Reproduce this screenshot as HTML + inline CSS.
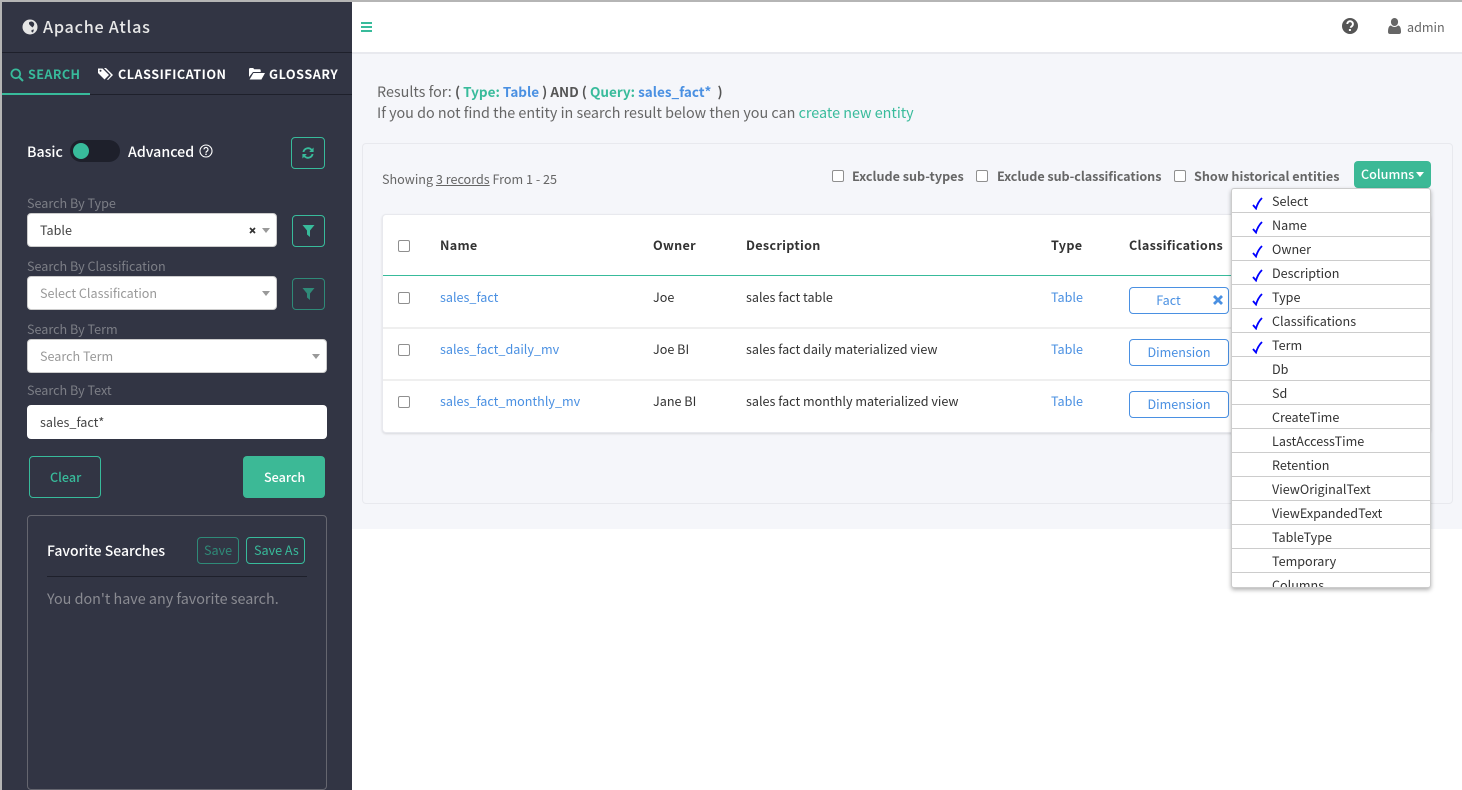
<!DOCTYPE html>
<html><head><meta charset="utf-8"><style>
*{box-sizing:border-box}
html,body{margin:0;padding:0;width:1462px;height:790px;overflow:hidden;background:#fff}
body{position:relative;font-family:"Noto Sans CJK SC","Liberation Sans",sans-serif;font-size:12.6px;color:#333}
.a{position:absolute}
.t{position:absolute;white-space:nowrap;line-height:20px;height:20px}
.b{font-weight:700}
.lbl{color:#7c7e86;font-size:12.6px}
.sel{position:absolute;background:#fff;border-radius:4px;border:1px solid #ccc;height:34px}
.car{position:absolute;width:0;height:0;border-left:4px solid transparent;border-right:4px solid transparent;border-top:5px solid #999}
.ib{position:absolute;border:1px solid #38bb9b;border-radius:4px}
.row{position:absolute;left:1232px;width:198px;height:24px;border-bottom:1px solid #ccc}
.row span{position:absolute;left:40px;top:2px;line-height:20px;font-size:12.6px;color:#333;white-space:nowrap}
.row i{position:absolute;left:20px;top:8px}
.cb{position:absolute;width:12px;height:12px;border:1px solid #8f8f8f;border-radius:2px;background:#fff}
.tag{position:absolute;left:1129px;width:100px;height:27px;border:1px solid #4a90e2;border-radius:4px;background:#fff;color:#4a90e2;text-align:center;line-height:24px;font-size:12.6px}
.blue{color:#4a90e2}.green{color:#38bb9b}
.q b{font-size:13.5px}
</style></head><body>
<div class="a" style="left:0;top:0;width:352px;height:790px;background:#323544"></div>
<div class="a" style="left:0;top:0;width:2px;height:790px;background:#b5b5b5"></div>
<div class="a" style="left:0;top:0;width:1462px;height:2px;background:#b5b5b5"></div>
<div class="a" style="left:2px;top:52px;width:350px;height:1px;background:#1e202b"></div>
<div class="a" style="left:2px;top:94px;width:350px;height:1px;background:#1e202b"></div>
<div class="a" style="left:2px;top:93px;width:88px;height:2px;background:#38bb9b"></div>

<svg class="a" style="left:22px;top:19px" width="16" height="16" viewBox="0 0 16 16"><circle cx="8" cy="8" r="7.500" fill="#e6e6e6"/><path d="M7 3.500C8 2.500 10 2 11.500 3.500 13 5 12 7 10.500 8.500 9.500 7.500 8 6.500 7 5zM9.500 11l2.500-.5-1 3-1.500-.5z" fill="#323544"/></svg>
<div class="t" style="left:43px;top:16px;font-size:16.2px;color:#e8e8e8;letter-spacing:.75px;font-weight:500">Apache Atlas</div>

<svg class="a" style="left:10px;top:68px" width="14" height="14" viewBox="0 0 14 14"><circle cx="5.800" cy="5.800" r="4.400" fill="none" stroke="#38bb9b" stroke-width="1.800"/><path d="M9 9l4 4" stroke="#38bb9b" stroke-width="2"/></svg>
<div class="t b green" style="left:28px;top:64px;font-size:12.6px;letter-spacing:.4px">SEARCH</div>
<svg class="a" style="left:98px;top:67px" width="16" height="14" viewBox="0 0 16 14"><path d="M0 1.500V6l6.500 6.500L11 8 4.500 1.500z" fill="#fff"/><path d="M6 1l6.500 6.500a1 1 0 0 1 0 1.200L9 12.500l1 .5 5-5L8 1z" fill="#fff"/><circle cx="2.500" cy="3.700" r="1" fill="#323544"/></svg>
<div class="t b" style="left:118px;top:64px;font-size:12.6px;letter-spacing:.52px;color:#fff">CLASSIFICATION</div>
<svg class="a" style="left:249px;top:68px" width="16" height="12" viewBox="0 0 16 12"><path d="M0 1.200C0 .5.500 0 1.200 0h3l1 1.300h5.500c.6 0 1 .4 1 1V4H4L0 9z" fill="#fff"/><path d="M4.400 5H16l-3.600 6.500H.6z" fill="#fff"/></svg>
<div class="t b" style="left:269px;top:64px;font-size:12.6px;letter-spacing:.55px;color:#fff">GLOSSARY</div>

<div class="t" style="left:27px;top:142px;font-size:14.2px;color:#fff;font-weight:500">Basic</div>
<div class="a" style="left:70px;top:140px;width:50px;height:22px;border-radius:11px;background:#1e202b"></div>
<div class="a" style="left:73px;top:143px;width:16px;height:16px;border-radius:50%;background:#38bb9b"></div>
<div class="t" style="left:128px;top:142px;font-size:14.2px;color:#fff;font-weight:500">Advanced</div>
<svg class="a" style="left:199px;top:144px" width="14" height="14" viewBox="0 0 14 14"><circle cx="7" cy="7" r="6" fill="none" stroke="#fff" stroke-width="1.100"/><path d="M5 5.400a2 2 0 1 1 3 1.800c-.7.4-1 .7-1 1.500" fill="none" stroke="#fff" stroke-width="1.200"/><rect x="6.300" y="9.600" width="1.400" height="1.400" fill="#fff"/></svg>
<div class="ib" style="left:291px;top:137px;width:34px;height:32px"></div>
<svg class="a" style="left:301px;top:146px" width="14" height="14" viewBox="0 0 14 14"><path d="M1.500 6A5.600 5.600 0 0 1 11 3l1.600-1.500V6H8.200l1.600-1.700A3.800 3.800 0 0 0 3.400 6zM12.500 8A5.600 5.600 0 0 1 3 11l-1.600 1.500V8h4.400l-1.600 1.700A3.800 3.800 0 0 0 10.600 8z" fill="#38bb9b"/></svg>

<div class="t lbl" style="left:27px;top:193px">Search By Type</div>
<div class="sel" style="left:27px;top:213px;width:250px"></div>
<div class="t" style="left:40px;top:220px;color:#444">Table</div>
<svg class="a" style="left:249px;top:227px" width="7" height="7" viewBox="0 0 7 7"><path d="M1 1l5 5M6 1l-5 5" stroke="#333" stroke-width="1.700"/></svg>
<div class="car" style="left:262px;top:228px"></div>
<div class="ib" style="left:292px;top:215px;width:33px;height:32px"></div>
<svg class="a" style="left:302px;top:225px" width="13" height="12" viewBox="0 0 13 12"><path d="M.5 0h12L8 5.500V12L5 9.500v-4z" fill="#38bb9b"/></svg>

<div class="t lbl" style="left:27px;top:256px">Search By Classification</div>
<div class="sel" style="left:27px;top:276px;width:250px"></div>
<div class="t" style="left:40px;top:283px;color:#999">Select Classification</div>
<div class="car" style="left:262px;top:291px"></div>
<div class="ib" style="left:292px;top:278px;width:33px;height:32px;border-color:#2f8a78"></div>
<svg class="a" style="left:302px;top:288px" width="13" height="12" viewBox="0 0 13 12"><path d="M.5 0h12L8 5.500V12L5 9.500v-4z" fill="#2f8a78"/></svg>

<div class="t lbl" style="left:27px;top:319px">Search By Term</div>
<div class="sel" style="left:27px;top:339px;width:300px"></div>
<div class="t" style="left:40px;top:346px;color:#999">Search Term</div>
<div class="car" style="left:312px;top:354px"></div>

<div class="t lbl" style="left:27px;top:380px">Search By Text</div>
<div class="a" style="left:27px;top:405px;width:300px;height:34px;background:#fff;border-radius:4px"></div>
<div class="t" style="left:40px;top:412px;color:#444">sales_fact*</div>

<div class="ib" style="left:29px;top:456px;width:72px;height:42px"></div>
<div class="t green" style="left:50px;top:467px;font-weight:500">Clear</div>
<div class="a" style="left:243px;top:456px;width:82px;height:42px;background:#3cb996;border-radius:4px"></div>
<div class="t" style="left:264px;top:467px;color:#fff;font-weight:500">Search</div>

<div class="a" style="left:27px;top:515px;width:300px;height:275px;border:1px solid #65666f;border-radius:4px"></div>
<div class="t" style="left:47px;top:541px;font-size:14px;color:#fff;font-weight:500">Favorite Searches</div>
<div class="ib" style="left:197px;top:537px;width:42px;height:27px;border-color:#2f8a78"></div>
<div class="t" style="left:204px;top:540px;color:#2f8a78">Save</div>
<div class="ib" style="left:246px;top:537px;width:59px;height:27px"></div>
<div class="t green" style="left:254px;top:540px">Save As</div>
<div class="a" style="left:47px;top:576px;width:260px;height:1px;background:#1e202b"></div>
<div class="t" style="left:47px;top:589px;font-size:14.35px;color:#8a8b92">You don't have any favorite search.</div>

<div class="a" style="left:352px;top:2px;width:1110px;height:50px;background:#fff"></div>
<div class="a" style="left:352px;top:52px;width:1110px;height:2px;background:#e8e9ee"></div>
<div class="a" style="left:352px;top:54px;width:1110px;height:475px;background:#f5f6fa"></div>
<div class="a" style="left:361px;top:22px;width:11px;height:2px;background:#38bb9b"></div>
<div class="a" style="left:361px;top:26px;width:11px;height:2px;background:#38bb9b"></div>
<div class="a" style="left:361px;top:30px;width:11px;height:2px;background:#38bb9b"></div>
<svg class="a" style="left:1342px;top:18px" width="16" height="16" viewBox="0 0 16 16"><circle cx="8" cy="8" r="8" fill="#555"/><path d="M5.300 6a2.800 2.800 0 1 1 4.300 2.400c-.7.4-.9.7-.9 1.400" fill="none" stroke="#fff" stroke-width="1.900"/><rect x="6.900" y="11" width="2" height="2" fill="#fff"/></svg>
<svg class="a" style="left:1388px;top:18px" width="13" height="16" viewBox="0 0 13 16"><ellipse cx="6.500" cy="4" rx="3.600" ry="4" fill="#666"/><path d="M0 14c0-4 1-6.500 3-6.500 1 1 2.200 1.500 3.500 1.500S9 8.500 10 7.500c2 0 3 2.500 3 6.500 0 1.300-.8 2-2 2H2c-1.200 0-2-.7-2-2z" fill="#666"/></svg>
<div class="t" style="left:1407px;top:17px;color:#666">admin</div>

<div class="t q" style="left:377px;top:81px;font-size:14.35px;color:#666">Results for: <b style="color:#555">( </b><b class="green">Type: </b><b class="blue">Table</b><b style="color:#555"> ) AND ( </b><b class="green">Query: </b><b class="blue">sales_fact*</b><b style="color:#555">&nbsp; )</b></div>
<div class="t" style="left:377px;top:103px;font-size:14.35px;color:#666">If you do not find the entity in search result below then you can <span class="green">create new entity</span></div>

<div class="a" style="left:362px;top:143px;width:1091px;height:361px;border:1px solid #e8e9ee;border-radius:4px;background:#f5f6fa"></div>
<div class="t" style="left:382px;top:169px;color:#666">Showing <u>3 records</u> From 1 - 25</div>
<div class="cb" style="left:832px;top:170px"></div>
<div class="t b" style="left:852px;top:166px;color:#666">Exclude sub-types</div>
<div class="cb" style="left:976px;top:170px"></div>
<div class="t b" style="left:997px;top:166px;color:#666;letter-spacing:-.05px">Exclude sub-classifications</div>
<div class="cb" style="left:1174px;top:170px"></div>
<div class="t b" style="left:1194px;top:166px;color:#666">Show historical entities</div>
<div class="a" style="left:1354px;top:161px;width:77px;height:27px;background:#3cb996;border-radius:4px"></div>
<div class="t" style="left:1361px;top:164px;color:#fff;font-weight:500">Columns</div>
<div class="car" style="left:1416px;top:172px;border-top-color:#fff"></div>

<div class="a" style="left:382px;top:214px;width:1049px;height:219px;background:#fff;border:1px solid #e8e9ee;border-radius:4px;box-shadow:0 1px 2px rgba(0,0,0,.12)"></div>
<div class="a" style="left:383px;top:275px;width:1047px;height:1px;background:#38bb9b"></div>
<div class="a" style="left:383px;top:327px;width:1047px;height:2px;background:#efefef"></div>
<div class="a" style="left:383px;top:379px;width:1047px;height:2px;background:#efefef"></div>
<div class="cb" style="left:398px;top:240px"></div>
<div class="cb" style="left:398px;top:292px"></div>
<div class="cb" style="left:398px;top:344px"></div>
<div class="cb" style="left:398px;top:396px"></div>
<div class="t b" style="left:440px;top:235px;letter-spacing:.3px">Name</div>
<div class="t b" style="left:653px;top:235px;letter-spacing:.3px">Owner</div>
<div class="t b" style="left:746px;top:235px;letter-spacing:.3px">Description</div>
<div class="t b" style="left:1051px;top:235px;letter-spacing:.3px">Type</div>
<div class="t b" style="left:1129px;top:235px;letter-spacing:.3px">Classifications</div>

<div class="t blue" style="left:440px;top:287px">sales_fact</div>
<div class="t" style="left:653px;top:287px">Joe</div>
<div class="t" style="left:746px;top:287px">sales fact table</div>
<div class="t blue" style="left:1051px;top:287px">Table</div>
<div class="tag" style="top:287px;padding-right:21px">Fact</div>
<svg class="a" style="left:1213px;top:295px" width="10" height="10" viewBox="0 0 10 10"><path d="M1 1l8 8M9 1l-8 8" stroke="#4a90e2" stroke-width="2.800"/></svg>

<div class="t blue" style="left:440px;top:339px">sales_fact_daily_mv</div>
<div class="t" style="left:653px;top:339px">Joe BI</div>
<div class="t" style="left:746px;top:339px">sales fact daily materialized view</div>
<div class="t blue" style="left:1051px;top:339px">Table</div>
<div class="tag" style="top:339px">Dimension</div>

<div class="t blue" style="left:440px;top:391px">sales_fact_monthly_mv</div>
<div class="t" style="left:653px;top:391px">Jane BI</div>
<div class="t" style="left:746px;top:391px">sales fact monthly materialized view</div>
<div class="t blue" style="left:1051px;top:391px">Table</div>
<div class="tag" style="top:391px">Dimension</div>

<div class="a" style="left:1231px;top:188px;width:200px;height:400px;background:#fff;border:1px solid #ccc;border-radius:3px;box-shadow:0 2px 4px rgba(0,0,0,.3);overflow:hidden">
<div class="row" style="left:0;top:0"><i><svg width="11" height="13" viewBox="0 0 11 13" style="display:block"><path d="M1 8l3 3.500C5 8 7 4 10 1" fill="none" stroke="#00f" stroke-width="1.800"/></svg></i><span>Select</span></div>
<div class="row" style="left:0;top:24px"><i><svg width="11" height="13" viewBox="0 0 11 13" style="display:block"><path d="M1 8l3 3.500C5 8 7 4 10 1" fill="none" stroke="#00f" stroke-width="1.800"/></svg></i><span>Name</span></div>
<div class="row" style="left:0;top:48px"><i><svg width="11" height="13" viewBox="0 0 11 13" style="display:block"><path d="M1 8l3 3.500C5 8 7 4 10 1" fill="none" stroke="#00f" stroke-width="1.800"/></svg></i><span>Owner</span></div>
<div class="row" style="left:0;top:72px"><i><svg width="11" height="13" viewBox="0 0 11 13" style="display:block"><path d="M1 8l3 3.500C5 8 7 4 10 1" fill="none" stroke="#00f" stroke-width="1.800"/></svg></i><span>Description</span></div>
<div class="row" style="left:0;top:96px"><i><svg width="11" height="13" viewBox="0 0 11 13" style="display:block"><path d="M1 8l3 3.500C5 8 7 4 10 1" fill="none" stroke="#00f" stroke-width="1.800"/></svg></i><span>Type</span></div>
<div class="row" style="left:0;top:120px"><i><svg width="11" height="13" viewBox="0 0 11 13" style="display:block"><path d="M1 8l3 3.500C5 8 7 4 10 1" fill="none" stroke="#00f" stroke-width="1.800"/></svg></i><span>Classifications</span></div>
<div class="row" style="left:0;top:144px"><i><svg width="11" height="13" viewBox="0 0 11 13" style="display:block"><path d="M1 8l3 3.500C5 8 7 4 10 1" fill="none" stroke="#00f" stroke-width="1.800"/></svg></i><span>Term</span></div>
<div class="row" style="left:0;top:168px"><span>Db</span></div>
<div class="row" style="left:0;top:192px"><span>Sd</span></div>
<div class="row" style="left:0;top:216px"><span>CreateTime</span></div>
<div class="row" style="left:0;top:240px"><span>LastAccessTime</span></div>
<div class="row" style="left:0;top:264px"><span>Retention</span></div>
<div class="row" style="left:0;top:288px"><span>ViewOriginalText</span></div>
<div class="row" style="left:0;top:312px"><span>ViewExpandedText</span></div>
<div class="row" style="left:0;top:336px"><span>TableType</span></div>
<div class="row" style="left:0;top:360px"><span>Temporary</span></div>
<div class="row" style="left:0;top:384px"><span>Columns</span></div>
</div>
</body></html>
